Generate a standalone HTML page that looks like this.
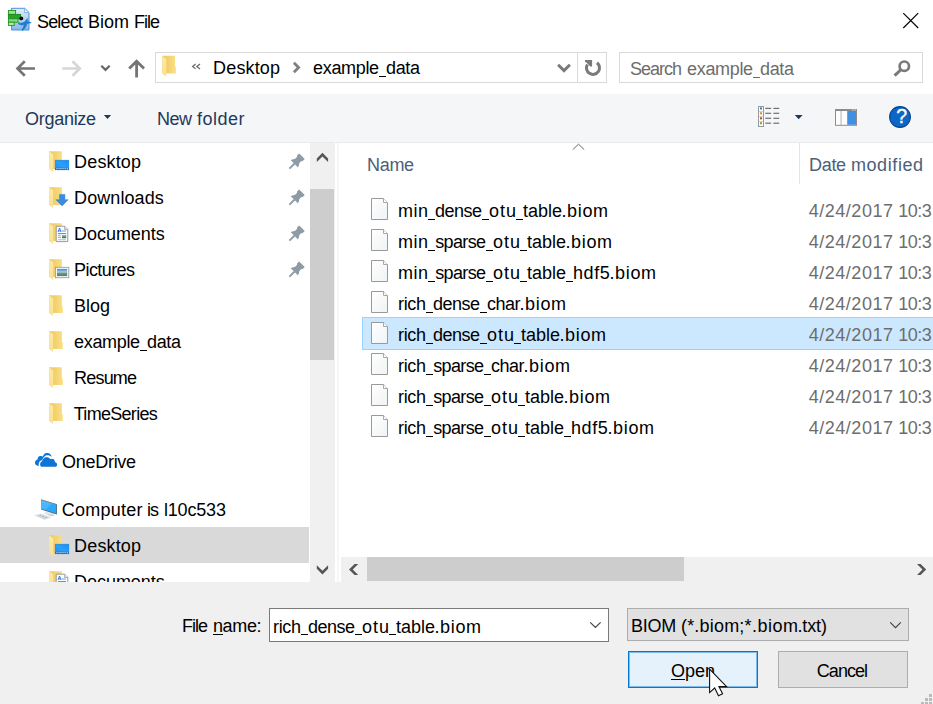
<!DOCTYPE html>
<html><head><meta charset="utf-8"><title>Select Biom File</title>
<style>
html,body{margin:0;padding:0;}
body{width:933px;height:704px;overflow:hidden;background:#fff;font-family:"Liberation Sans", sans-serif;position:relative;}
.t{position:absolute;white-space:pre;font-family:"Liberation Sans", sans-serif;}
.a{position:absolute;}
u{text-decoration:underline;text-underline-offset:2px;text-decoration-thickness:1px;}
</style></head>
<body>
<div class="a" style="left:0;top:94px;width:933px;height:48px;background:#f5f6f7;"></div>
<div class="a" style="left:0;top:142px;width:933px;height:1px;background:#e9eaeb;"></div>
<div class="a" style="left:0;top:582px;width:933px;height:122px;background:#f0f0f0;"></div>
<span class="t" style="left:37.05px;top:12.76px;font-size:18px;line-height:18px;letter-spacing:-0.850px;color:#000;">Select</span><span class="t" style="left:88.10px;top:12.76px;font-size:18px;line-height:18px;letter-spacing:-0.017px;color:#000;">Biom</span><span class="t" style="left:134.10px;top:12.76px;font-size:18px;line-height:18px;letter-spacing:-1.017px;color:#000;">File</span>
<div class="a" style="left:155px;top:52px;width:452px;height:31px;border:1px solid #d9d9d9;box-sizing:border-box;background:#fff;"></div>
<div class="a" style="left:577px;top:53px;width:1px;height:29px;background:#d9d9d9;"></div>
<span class="t" style="left:213.10px;top:59.26px;font-size:18px;line-height:18px;letter-spacing:0.142px;color:#000;">Desktop</span>
<span class="t" style="left:313.05px;top:59.26px;font-size:18px;line-height:18px;letter-spacing:-0.333px;color:#000;">example</span><div class="a" style="left:378.80px;top:76.00px;width:7.40px;height:1.2px;background:#000;"></div><span class="t" style="left:386.05px;top:59.26px;font-size:18px;line-height:18px;letter-spacing:-0.350px;color:#000;">data</span>
<div class="a" style="left:619px;top:52px;width:304px;height:31px;border:1px solid #d9d9d9;box-sizing:border-box;background:#fff;"></div>
<span class="t" style="left:630.05px;top:59.76px;font-size:18px;line-height:18px;letter-spacing:-1.000px;color:#6d6d6d;">Search</span><span class="t" style="left:687.05px;top:59.76px;font-size:18px;line-height:18px;letter-spacing:-0.333px;color:#6d6d6d;">example</span><div class="a" style="left:752.80px;top:77.00px;width:7.40px;height:1.2px;background:#6d6d6d;"></div><span class="t" style="left:760.05px;top:59.76px;font-size:18px;line-height:18px;letter-spacing:-0.350px;color:#6d6d6d;">data</span>
<span class="t" style="left:25.05px;top:110.06px;font-size:18px;line-height:18px;letter-spacing:-0.286px;color:#1e395b;">Organize</span>
<span class="t" style="left:157.10px;top:110.06px;font-size:18px;line-height:18px;letter-spacing:-0.600px;color:#1e395b;">New</span><span class="t" style="left:196.95px;top:110.06px;font-size:18px;line-height:18px;letter-spacing:0.500px;color:#1e395b;">folder</span>
<div class="a" style="left:0;top:527px;width:309px;height:36px;background:#d9d9d9;"></div>
<span class="t" style="left:74.10px;top:152.96px;font-size:18px;line-height:18px;letter-spacing:0.142px;color:#000;">Desktop</span>
<span class="t" style="left:74.10px;top:188.96px;font-size:18px;line-height:18px;letter-spacing:0.075px;color:#000;">Downloads</span>
<span class="t" style="left:74.10px;top:224.96px;font-size:18px;line-height:18px;letter-spacing:-0.050px;color:#000;">Documents</span>
<span class="t" style="left:74.10px;top:260.96px;font-size:18px;line-height:18px;letter-spacing:-0.593px;color:#000;">Pictures</span>
<span class="t" style="left:74.10px;top:296.96px;font-size:18px;line-height:18px;letter-spacing:-0.017px;color:#000;">Blog</span>
<span class="t" style="left:74.05px;top:332.96px;font-size:18px;line-height:18px;letter-spacing:-0.333px;color:#000;">example</span><div class="a" style="left:139.80px;top:350.00px;width:7.40px;height:1.2px;background:#000;"></div><span class="t" style="left:147.05px;top:332.96px;font-size:18px;line-height:18px;letter-spacing:-0.350px;color:#000;">data</span>
<span class="t" style="left:74.10px;top:368.96px;font-size:18px;line-height:18px;letter-spacing:-0.810px;color:#000;">Resume</span>
<span class="t" style="left:73.70px;top:404.96px;font-size:18px;line-height:18px;letter-spacing:-0.694px;color:#000;">TimeSeries</span>
<span class="t" style="left:62.05px;top:452.96px;font-size:18px;line-height:18px;letter-spacing:-0.286px;color:#000;">OneDrive</span>
<span class="t" style="left:61.80px;top:500.96px;font-size:18px;line-height:18px;letter-spacing:0.236px;color:#000;">Computer</span><span class="t" style="left:146.95px;top:500.96px;font-size:18px;line-height:18px;letter-spacing:-1.000px;color:#000;">is</span><span class="t" style="left:163.95px;top:500.96px;font-size:18px;line-height:18px;letter-spacing:-0.183px;color:#000;">l10c533</span>
<span class="t" style="left:74.10px;top:536.96px;font-size:18px;line-height:18px;letter-spacing:0.142px;color:#000;">Desktop</span>
<div class="a" style="left:0;top:563px;width:309px;height:19px;overflow:hidden;"><span class="t" style="left:74.10px;top:9.96px;font-size:18px;line-height:18px;letter-spacing:-0.050px;color:#000;">Documents</span></div>
<div class="a" style="left:310px;top:143px;width:25px;height:439px;background:#f0f0f0;"></div>
<div class="a" style="left:310px;top:189px;width:24px;height:171px;background:#cdcdcd;"></div>
<div class="a" style="left:337px;top:143px;width:2px;height:439px;background:#f7f7f7;"></div>
<div class="a" style="left:799px;top:143px;width:1px;height:41px;background:#e5e5e5;"></div>
<span class="t" style="left:367.10px;top:156.46px;font-size:18px;line-height:18px;letter-spacing:-0.350px;color:#4c607a;">Name</span>
<span class="t" style="left:809.10px;top:156.46px;font-size:18px;line-height:18px;letter-spacing:-0.350px;color:#4c607a;">Date</span><span class="t" style="left:850.95px;top:156.46px;font-size:18px;line-height:18px;letter-spacing:0.586px;color:#4c607a;">modified</span>
<div class="a" style="left:362px;top:317px;width:580px;height:33px;background:#cce8ff;border:1px solid #99d1ff;box-sizing:border-box;"></div>
<span class="t" style="left:397.95px;top:201.76px;font-size:18px;line-height:18px;letter-spacing:0.550px;color:#000;">min</span><div class="a" style="left:427.80px;top:219.00px;width:7.40px;height:1.2px;background:#000;"></div><span class="t" style="left:435.05px;top:201.76px;font-size:18px;line-height:18px;letter-spacing:-0.500px;color:#000;">dense</span><div class="a" style="left:481.80px;top:219.00px;width:7.40px;height:1.2px;background:#000;"></div><span class="t" style="left:489.05px;top:201.76px;font-size:18px;line-height:18px;letter-spacing:1.000px;color:#000;">otu</span><div class="a" style="left:515.80px;top:219.00px;width:7.40px;height:1.2px;background:#000;"></div><span class="t" style="left:523.05px;top:201.76px;font-size:18px;line-height:18px;letter-spacing:0.000px;color:#000;">table</span><span class="t" style="left:561.45px;top:201.76px;font-size:18px;line-height:18px;letter-spacing:0.650px;color:#000;">.biom</span>
<span class="t" style="left:808.80px;top:201.76px;font-size:18px;line-height:18px;letter-spacing:0.506px;color:#6d6d6d;">4/24/2017</span><span class="t" style="left:898.35px;top:201.76px;font-size:18px;line-height:18px;letter-spacing:-0.500px;color:#6d6d6d;">10:3</span>
<span class="t" style="left:397.95px;top:232.76px;font-size:18px;line-height:18px;letter-spacing:0.550px;color:#000;">min</span><div class="a" style="left:427.80px;top:250.00px;width:7.40px;height:1.2px;background:#000;"></div><span class="t" style="left:435.20px;top:232.76px;font-size:18px;line-height:18px;letter-spacing:-0.630px;color:#000;">sparse</span><div class="a" style="left:485.80px;top:250.00px;width:7.40px;height:1.2px;background:#000;"></div><span class="t" style="left:493.05px;top:232.76px;font-size:18px;line-height:18px;letter-spacing:1.000px;color:#000;">otu</span><div class="a" style="left:519.80px;top:250.00px;width:7.40px;height:1.2px;background:#000;"></div><span class="t" style="left:527.05px;top:232.76px;font-size:18px;line-height:18px;letter-spacing:0.000px;color:#000;">table</span><span class="t" style="left:565.45px;top:232.76px;font-size:18px;line-height:18px;letter-spacing:0.650px;color:#000;">.biom</span>
<span class="t" style="left:808.80px;top:232.76px;font-size:18px;line-height:18px;letter-spacing:0.506px;color:#6d6d6d;">4/24/2017</span><span class="t" style="left:898.35px;top:232.76px;font-size:18px;line-height:18px;letter-spacing:-0.500px;color:#6d6d6d;">10:3</span>
<span class="t" style="left:397.95px;top:263.76px;font-size:18px;line-height:18px;letter-spacing:0.550px;color:#000;">min</span><div class="a" style="left:427.80px;top:281.00px;width:7.40px;height:1.2px;background:#000;"></div><span class="t" style="left:435.20px;top:263.76px;font-size:18px;line-height:18px;letter-spacing:-0.630px;color:#000;">sparse</span><div class="a" style="left:485.80px;top:281.00px;width:7.40px;height:1.2px;background:#000;"></div><span class="t" style="left:493.05px;top:263.76px;font-size:18px;line-height:18px;letter-spacing:1.000px;color:#000;">otu</span><div class="a" style="left:519.80px;top:281.00px;width:7.40px;height:1.2px;background:#000;"></div><span class="t" style="left:527.05px;top:263.76px;font-size:18px;line-height:18px;letter-spacing:0.000px;color:#000;">table</span><div class="a" style="left:565.80px;top:281.00px;width:7.40px;height:1.2px;background:#000;"></div><span class="t" style="left:572.95px;top:263.76px;font-size:18px;line-height:18px;letter-spacing:0.633px;color:#000;">hdf5</span><span class="t" style="left:609.45px;top:263.76px;font-size:18px;line-height:18px;letter-spacing:0.650px;color:#000;">.biom</span>
<span class="t" style="left:808.80px;top:263.76px;font-size:18px;line-height:18px;letter-spacing:0.506px;color:#6d6d6d;">4/24/2017</span><span class="t" style="left:898.35px;top:263.76px;font-size:18px;line-height:18px;letter-spacing:-0.500px;color:#6d6d6d;">10:3</span>
<span class="t" style="left:397.95px;top:294.76px;font-size:18px;line-height:18px;letter-spacing:-0.300px;color:#000;">rich</span><div class="a" style="left:425.80px;top:312.00px;width:7.40px;height:1.2px;background:#000;"></div><span class="t" style="left:433.05px;top:294.76px;font-size:18px;line-height:18px;letter-spacing:-0.500px;color:#000;">dense</span><div class="a" style="left:479.80px;top:312.00px;width:7.40px;height:1.2px;background:#000;"></div><span class="t" style="left:487.05px;top:294.76px;font-size:18px;line-height:18px;letter-spacing:-0.533px;color:#000;">char</span><span class="t" style="left:519.45px;top:294.76px;font-size:18px;line-height:18px;letter-spacing:0.650px;color:#000;">.biom</span>
<span class="t" style="left:808.80px;top:294.76px;font-size:18px;line-height:18px;letter-spacing:0.506px;color:#6d6d6d;">4/24/2017</span><span class="t" style="left:898.35px;top:294.76px;font-size:18px;line-height:18px;letter-spacing:-0.500px;color:#6d6d6d;">10:3</span>
<span class="t" style="left:397.95px;top:325.76px;font-size:18px;line-height:18px;letter-spacing:-0.300px;color:#000;">rich</span><div class="a" style="left:425.80px;top:343.00px;width:7.40px;height:1.2px;background:#000;"></div><span class="t" style="left:433.05px;top:325.76px;font-size:18px;line-height:18px;letter-spacing:-0.500px;color:#000;">dense</span><div class="a" style="left:479.80px;top:343.00px;width:7.40px;height:1.2px;background:#000;"></div><span class="t" style="left:487.05px;top:325.76px;font-size:18px;line-height:18px;letter-spacing:1.000px;color:#000;">otu</span><div class="a" style="left:513.80px;top:343.00px;width:7.40px;height:1.2px;background:#000;"></div><span class="t" style="left:521.05px;top:325.76px;font-size:18px;line-height:18px;letter-spacing:0.000px;color:#000;">table</span><span class="t" style="left:559.45px;top:325.76px;font-size:18px;line-height:18px;letter-spacing:0.650px;color:#000;">.biom</span>
<span class="t" style="left:808.80px;top:325.76px;font-size:18px;line-height:18px;letter-spacing:0.506px;color:#6d6d6d;">4/24/2017</span><span class="t" style="left:898.35px;top:325.76px;font-size:18px;line-height:18px;letter-spacing:-0.500px;color:#6d6d6d;">10:3</span>
<span class="t" style="left:397.95px;top:356.76px;font-size:18px;line-height:18px;letter-spacing:-0.300px;color:#000;">rich</span><div class="a" style="left:425.80px;top:374.00px;width:7.40px;height:1.2px;background:#000;"></div><span class="t" style="left:433.20px;top:356.76px;font-size:18px;line-height:18px;letter-spacing:-0.630px;color:#000;">sparse</span><div class="a" style="left:483.80px;top:374.00px;width:7.40px;height:1.2px;background:#000;"></div><span class="t" style="left:491.05px;top:356.76px;font-size:18px;line-height:18px;letter-spacing:-0.533px;color:#000;">char</span><span class="t" style="left:523.45px;top:356.76px;font-size:18px;line-height:18px;letter-spacing:0.650px;color:#000;">.biom</span>
<span class="t" style="left:808.80px;top:356.76px;font-size:18px;line-height:18px;letter-spacing:0.506px;color:#6d6d6d;">4/24/2017</span><span class="t" style="left:898.35px;top:356.76px;font-size:18px;line-height:18px;letter-spacing:-0.500px;color:#6d6d6d;">10:3</span>
<span class="t" style="left:397.95px;top:387.76px;font-size:18px;line-height:18px;letter-spacing:-0.300px;color:#000;">rich</span><div class="a" style="left:425.80px;top:405.00px;width:7.40px;height:1.2px;background:#000;"></div><span class="t" style="left:433.20px;top:387.76px;font-size:18px;line-height:18px;letter-spacing:-0.630px;color:#000;">sparse</span><div class="a" style="left:483.80px;top:405.00px;width:7.40px;height:1.2px;background:#000;"></div><span class="t" style="left:491.05px;top:387.76px;font-size:18px;line-height:18px;letter-spacing:1.000px;color:#000;">otu</span><div class="a" style="left:517.80px;top:405.00px;width:7.40px;height:1.2px;background:#000;"></div><span class="t" style="left:525.05px;top:387.76px;font-size:18px;line-height:18px;letter-spacing:0.000px;color:#000;">table</span><span class="t" style="left:563.45px;top:387.76px;font-size:18px;line-height:18px;letter-spacing:0.650px;color:#000;">.biom</span>
<span class="t" style="left:808.80px;top:387.76px;font-size:18px;line-height:18px;letter-spacing:0.506px;color:#6d6d6d;">4/24/2017</span><span class="t" style="left:898.35px;top:387.76px;font-size:18px;line-height:18px;letter-spacing:-0.500px;color:#6d6d6d;">10:3</span>
<span class="t" style="left:397.95px;top:418.76px;font-size:18px;line-height:18px;letter-spacing:-0.300px;color:#000;">rich</span><div class="a" style="left:425.80px;top:436.00px;width:7.40px;height:1.2px;background:#000;"></div><span class="t" style="left:433.20px;top:418.76px;font-size:18px;line-height:18px;letter-spacing:-0.630px;color:#000;">sparse</span><div class="a" style="left:483.80px;top:436.00px;width:7.40px;height:1.2px;background:#000;"></div><span class="t" style="left:491.05px;top:418.76px;font-size:18px;line-height:18px;letter-spacing:1.000px;color:#000;">otu</span><div class="a" style="left:517.80px;top:436.00px;width:7.40px;height:1.2px;background:#000;"></div><span class="t" style="left:525.05px;top:418.76px;font-size:18px;line-height:18px;letter-spacing:0.000px;color:#000;">table</span><div class="a" style="left:563.80px;top:436.00px;width:7.40px;height:1.2px;background:#000;"></div><span class="t" style="left:570.95px;top:418.76px;font-size:18px;line-height:18px;letter-spacing:0.633px;color:#000;">hdf5</span><span class="t" style="left:607.45px;top:418.76px;font-size:18px;line-height:18px;letter-spacing:0.650px;color:#000;">.biom</span>
<span class="t" style="left:808.80px;top:418.76px;font-size:18px;line-height:18px;letter-spacing:0.506px;color:#6d6d6d;">4/24/2017</span><span class="t" style="left:898.35px;top:418.76px;font-size:18px;line-height:18px;letter-spacing:-0.500px;color:#6d6d6d;">10:3</span>
<div class="a" style="left:341px;top:557px;width:592px;height:25px;background:#f0f0f0;"></div>
<div class="a" style="left:367px;top:557px;width:317px;height:24px;background:#cdcdcd;"></div>
<span class="t" style="left:182.10px;top:617.26px;font-size:18px;line-height:18px;letter-spacing:-1.017px;color:#000;">File</span><div class="a" style="left:213px;top:633.70px;width:10px;height:1.1px;background:#000;"></div><span class="t" style="left:212.95px;top:617.26px;font-size:18px;line-height:18px;letter-spacing:-0.350px;color:#000;">name:</span>
<div class="a" style="left:269px;top:608px;width:340px;height:34px;border:1px solid #7a7a7a;box-sizing:border-box;background:#fff;"></div>
<span class="t" style="left:272.95px;top:617.56px;font-size:18px;line-height:18px;letter-spacing:-0.300px;color:#000;">rich</span><div class="a" style="left:300.80px;top:634.00px;width:7.40px;height:1.2px;background:#000;"></div><span class="t" style="left:308.05px;top:617.56px;font-size:18px;line-height:18px;letter-spacing:-0.500px;color:#000;">dense</span><div class="a" style="left:354.80px;top:634.00px;width:7.40px;height:1.2px;background:#000;"></div><span class="t" style="left:362.05px;top:617.56px;font-size:18px;line-height:18px;letter-spacing:1.000px;color:#000;">otu</span><div class="a" style="left:388.80px;top:634.00px;width:7.40px;height:1.2px;background:#000;"></div><span class="t" style="left:396.05px;top:617.56px;font-size:18px;line-height:18px;letter-spacing:0.000px;color:#000;">table</span><span class="t" style="left:434.45px;top:617.56px;font-size:18px;line-height:18px;letter-spacing:0.650px;color:#000;">.biom</span>
<div class="a" style="left:627px;top:608px;width:282px;height:33px;border:1px solid #adadad;box-sizing:border-box;background:#e1e1e1;"></div>
<span class="t" style="left:631.10px;top:617.36px;font-size:18px;line-height:18px;letter-spacing:-0.267px;color:#000;">BIOM</span><span class="t" style="left:681.00px;top:617.36px;font-size:18px;line-height:18px;letter-spacing:0.186px;color:#000;">(*.biom;</span><span class="t" style="left:744.45px;top:617.36px;font-size:18px;line-height:18px;letter-spacing:0.520px;color:#000;">*.biom</span><span class="t" style="left:797.45px;top:617.36px;font-size:18px;line-height:18px;letter-spacing:-0.113px;color:#000;">.txt)</span>
<div class="a" style="left:628px;top:651px;width:130px;height:37px;border:1px solid #0078d7;box-sizing:border-box;background:#e5f1fb;box-shadow:inset 0 0 0 1px rgba(0,120,215,0.45);"></div>
<div class="a" style="left:671px;top:678.70px;width:14px;height:1.1px;background:#000;"></div><span class="t" style="left:671.05px;top:662.26px;font-size:18px;line-height:18px;letter-spacing:0.000px;color:#000;">Open</span>
<div class="a" style="left:778px;top:651px;width:130px;height:37px;border:1px solid #adadad;box-sizing:border-box;background:#e1e1e1;"></div>
<span class="t" style="left:816.80px;top:662.26px;font-size:18px;line-height:18px;letter-spacing:-0.950px;color:#000;">Cancel</span>
<svg class="a" style="left:0;top:0" width="933" height="704" viewBox="0 0 933 704">
<defs>
<linearGradient id="gFolderBack" x1="0" y1="0" x2="1" y2="0"><stop offset="0" stop-color="#efc95e"/><stop offset="0.3" stop-color="#f1ce66"/><stop offset="1" stop-color="#fbe08a"/></linearGradient>
<linearGradient id="gFolderFlap" x1="0" y1="0" x2="0" y2="1"><stop offset="0" stop-color="#fdeaa8"/><stop offset="1" stop-color="#f9e092"/></linearGradient>
<linearGradient id="gFile" x1="0" y1="0" x2="1" y2="1"><stop offset="0" stop-color="#ffffff"/><stop offset="1" stop-color="#f0f2f4"/></linearGradient>
<linearGradient id="gPage" x1="0" y1="0" x2="0" y2="1"><stop offset="0" stop-color="#e3edf9"/><stop offset="1" stop-color="#86b8e6"/></linearGradient>
<linearGradient id="gDesk" x1="0" y1="1" x2="1" y2="0"><stop offset="0" stop-color="#1e8ff2"/><stop offset="0.5" stop-color="#2aa0fb"/><stop offset="1" stop-color="#1c8cf0"/></linearGradient>
<linearGradient id="gPic" x1="0" y1="0" x2="0" y2="1"><stop offset="0" stop-color="#3f86d6"/><stop offset="0.45" stop-color="#a9cfee"/><stop offset="0.6" stop-color="#6f9a78"/><stop offset="1" stop-color="#5a7a6a"/></linearGradient>
<linearGradient id="gMon" x1="0" y1="0" x2="1" y2="1"><stop offset="0" stop-color="#55bcff"/><stop offset="0.5" stop-color="#44b4ff"/><stop offset="0.52" stop-color="#2ea9fb"/><stop offset="1" stop-color="#29a5f8"/></linearGradient>
</defs>
<g>
<path d="M11.5,8.3 L24.6,8.3 L29,12.6 L29,30 L11.5,30 Z" fill="url(#gPage)" stroke="#4d93d6" stroke-width="1"/>
<path d="M24.6,8.3 L24.6,12.6 L29,12.6 Z" fill="#f4f8fd" stroke="#6aa6de" stroke-width="0.8"/>
<path d="M18.5,22.8 C21,23.8 24,23 26,20.5 L27.4,18.6 L27.2,21.6 L31.2,22.6 L27,23.6 C26.4,26 25,28.6 22.6,30.4 L21.8,29.8 C23.4,27.8 24,26 24.2,24.6 C22.4,25.2 20.4,25 18.5,24 Z" fill="#1d7bd0" stroke="#1d7bd0" stroke-width="0.7" stroke-linejoin="round"/>
<rect x="8.4" y="10.4" width="7.2" height="4" fill="#9be08e" stroke="#1d9420" stroke-width="0.9"/>
<rect x="8.4" y="14.4" width="12.2" height="4.4" fill="#27a329" stroke="#148a18" stroke-width="0.9"/>
<rect x="8.4" y="18.8" width="9.6" height="3.4" fill="#8bd97e" stroke="#1d9420" stroke-width="0.9"/>
<rect x="8.4" y="22.2" width="5.8" height="3.2" fill="#b4eaa8" stroke="#1d9420" stroke-width="0.9"/>
<circle cx="21.3" cy="18.4" r="1.9" fill="#0a0a0a"/>
</g>
<path d="M903.3,13.1 L918.2,28 M918.2,13.1 L903.3,28" stroke="#000" stroke-width="1.15" fill="none"/>
<path d="M35,68.5 L17.8,68.5 M24.8,61.3 L17.5,68.5 L24.8,75.7" stroke="#747474" stroke-width="2.7" fill="none" stroke-linejoin="miter"/>
<path d="M62.3,68.5 L79.5,68.5 M72.5,61.3 L79.8,68.5 L72.5,75.7" stroke="#d6d6d6" stroke-width="2.7" fill="none"/>
<path d="M101.3,65.8 L105.5,69.9 L109.7,65.8" stroke="#666666" stroke-width="2.2" fill="none"/>
<path d="M136.6,77.6 L136.6,61.8 M129.2,68.6 L136.6,61.3 L144,68.6" stroke="#747474" stroke-width="2.8" fill="none"/>
<g transform="translate(162.2,55.8) scale(1.0)"><path d="M0,0 L12.8,0 L12.8,11 L13.7,11 L13.7,17.8 L0,17.8 Z" fill="url(#gFolderBack)"/><path d="M0,0.1 L4.1,3.2 L4.0,20.8 L0,17.9 Z" fill="url(#gFolderFlap)"/></g>
<path d="M195.6,64 L192.6,66.45 L195.6,68.9 M200,64 L196.8,66.45 L200,68.9" stroke="#666" stroke-width="1.2" fill="none"/>
<path d="M293.9,62.75 L298.6,67.45 L293.9,72.15" stroke="#808080" stroke-width="2.8" fill="none"/>
<path d="M558.1,64.7 L564,70.6 L569.9,64.7" stroke="#7a7a7a" stroke-width="3" fill="none"/>
<path d="M597.0,62.8 A6.5,6.5 0 1 1 587.4,64.6" stroke="#7a7a7a" stroke-width="3" fill="none"/>

<path d="M585.0,60.1 L592.1,60.1 L592.1,66.6 L590.2,66.6 L586.2,62.2 L585.0,62.0 Z" fill="#7a7a7a"/>
<circle cx="904.3" cy="66.2" r="4.7" stroke="#7a7a7a" stroke-width="2.7" fill="none"/>
<path d="M901.1,69.5 L894.6,75.7" stroke="#7a7a7a" stroke-width="3.1" fill="none" stroke-linecap="butt"/>
<path d="M103.9,115 L111.1,115 L107.5,119.1 Z" fill="#1e395b"/>
<rect x="758.5" y="106.5" width="5" height="20" fill="#fbfbfb" stroke="#9a9a9a" stroke-width="1"/>
<rect x="760" y="107.4" width="2" height="2" fill="#2b7cd3"/>
<rect x="765.3" y="107.80000000000001" width="5.8" height="1.2" fill="#707070"/>
<rect x="773.4" y="107.80000000000001" width="5.8" height="1.2" fill="#707070"/>
<rect x="760" y="112.3" width="2" height="2" fill="#e08a1e"/>
<rect x="765.3" y="112.7" width="5.8" height="1.2" fill="#707070"/>
<rect x="773.4" y="112.7" width="5.8" height="1.2" fill="#707070"/>
<rect x="760" y="117.3" width="2" height="2" fill="#d03a2a"/>
<rect x="765.3" y="117.7" width="5.8" height="1.2" fill="#707070"/>
<rect x="773.4" y="117.7" width="5.8" height="1.2" fill="#707070"/>
<rect x="760" y="122.2" width="2" height="2" fill="#7aa83a"/>
<rect x="765.3" y="122.60000000000001" width="5.8" height="1.2" fill="#707070"/>
<rect x="773.4" y="122.60000000000001" width="5.8" height="1.2" fill="#707070"/>
<rect x="759" y="111.05" width="4.5" height="0.6" fill="#b5b5b5"/>
<rect x="759" y="116.05" width="4.5" height="0.6" fill="#b5b5b5"/>
<rect x="759" y="121.05" width="4.5" height="0.6" fill="#b5b5b5"/>
<path d="M794.8,115 L802.6,115 L798.7,119.2 Z" fill="#1e395b"/>
<rect x="835.5" y="110" width="21" height="15.3" fill="#fdfdfd" stroke="#8c8c8c" stroke-width="1"/>
<rect x="835" y="109" width="22" height="2" fill="#8c8c8c"/>
<rect x="852" y="109.5" width="0.9" height="0.9" fill="#e8e8e8"/><rect x="853.6" y="109.5" width="0.9" height="0.9" fill="#e8e8e8"/><rect x="855.2" y="109.5" width="0.9" height="0.9" fill="#e8e8e8"/>
<rect x="840.6" y="111" width="0.9" height="14" fill="#a9a9a9"/>
<rect x="847.2" y="111" width="8.8" height="13.8" fill="#3f8fe2"/>
<circle cx="900" cy="117" r="11.6" fill="#ffffff" opacity="0.55"/><circle cx="900" cy="117" r="10.4" fill="#0a67c8" stroke="#07428c" stroke-width="1.1"/>
<g transform="translate(49.1,151.2) scale(1.0)"><path d="M0,0 L12.8,0 L12.8,11 L13.7,11 L13.7,17.8 L0,17.8 Z" fill="url(#gFolderBack)"/><path d="M0,0.1 L4.1,3.2 L4.0,20.8 L0,17.9 Z" fill="url(#gFolderFlap)"/></g>
<g transform="translate(49.1,187.2) scale(1.0)"><path d="M0,0 L12.8,0 L12.8,11 L13.7,11 L13.7,17.8 L0,17.8 Z" fill="url(#gFolderBack)"/><path d="M0,0.1 L4.1,3.2 L4.0,20.8 L0,17.9 Z" fill="url(#gFolderFlap)"/></g>
<g transform="translate(49.1,223.2) scale(1.0)"><path d="M0,0 L12.8,0 L12.8,11 L13.7,11 L13.7,17.8 L0,17.8 Z" fill="url(#gFolderBack)"/><path d="M0,0.1 L4.1,3.2 L4.0,20.8 L0,17.9 Z" fill="url(#gFolderFlap)"/></g>
<g transform="translate(49.1,259.2) scale(1.0)"><path d="M0,0 L12.8,0 L12.8,11 L13.7,11 L13.7,17.8 L0,17.8 Z" fill="url(#gFolderBack)"/><path d="M0,0.1 L4.1,3.2 L4.0,20.8 L0,17.9 Z" fill="url(#gFolderFlap)"/></g>
<g transform="translate(49.1,295.2) scale(1.0)"><path d="M0,0 L12.8,0 L12.8,11 L13.7,11 L13.7,17.8 L0,17.8 Z" fill="url(#gFolderBack)"/><path d="M0,0.1 L4.1,3.2 L4.0,20.8 L0,17.9 Z" fill="url(#gFolderFlap)"/></g>
<g transform="translate(49.1,331.2) scale(1.0)"><path d="M0,0 L12.8,0 L12.8,11 L13.7,11 L13.7,17.8 L0,17.8 Z" fill="url(#gFolderBack)"/><path d="M0,0.1 L4.1,3.2 L4.0,20.8 L0,17.9 Z" fill="url(#gFolderFlap)"/></g>
<g transform="translate(49.1,367.2) scale(1.0)"><path d="M0,0 L12.8,0 L12.8,11 L13.7,11 L13.7,17.8 L0,17.8 Z" fill="url(#gFolderBack)"/><path d="M0,0.1 L4.1,3.2 L4.0,20.8 L0,17.9 Z" fill="url(#gFolderFlap)"/></g>
<g transform="translate(49.1,403.2) scale(1.0)"><path d="M0,0 L12.8,0 L12.8,11 L13.7,11 L13.7,17.8 L0,17.8 Z" fill="url(#gFolderBack)"/><path d="M0,0.1 L4.1,3.2 L4.0,20.8 L0,17.9 Z" fill="url(#gFolderFlap)"/></g>
<g transform="translate(49.1,535.2) scale(1.0)"><path d="M0,0 L12.8,0 L12.8,11 L13.7,11 L13.7,17.8 L0,17.8 Z" fill="url(#gFolderBack)"/><path d="M0,0.1 L4.1,3.2 L4.0,20.8 L0,17.9 Z" fill="url(#gFolderFlap)"/></g>
<clipPath id="cNav"><rect x="0" y="563" width="309" height="19"/></clipPath>
<g clip-path="url(#cNav)"><g transform="translate(49.1,571.2) scale(1.0)"><path d="M0,0 L12.8,0 L12.8,11 L13.7,11 L13.7,17.8 L0,17.8 Z" fill="url(#gFolderBack)"/><path d="M0,0.1 L4.1,3.2 L4.0,20.8 L0,17.9 Z" fill="url(#gFolderFlap)"/></g>
<g transform="translate(0,348)"><path d="M56.2,226.2 L64.6,226.2 L67.8,229.4 L67.8,241.6 L56.2,241.6 Z" fill="#fdfdfd" stroke="#8f8f8f" stroke-width="0.9"/><path d="M64.6,226.2 L64.6,229.4 L67.8,229.4" fill="#e9e9e9" stroke="#8f8f8f" stroke-width="0.7"/><path d="M58,232 L59.6,228 L61,232 M58.6,230.8 L60.5,230.8" stroke="#1f78d6" stroke-width="0.9" fill="none"/><rect x="61.6" y="230.6" width="4.4" height="0.8" fill="#3d8de0"/><rect x="58" y="233.2" width="8" height="0.9" fill="#2b80dc"/><rect x="58" y="235.4" width="3" height="0.8" fill="#9a9a9a"/><rect x="58" y="237.2" width="3" height="0.8" fill="#9a9a9a"/><rect x="62" y="235.2" width="4.2" height="1.2" fill="#5a9be6"/><rect x="62" y="236.4" width="4.2" height="1.8" fill="#3f7a4a"/><rect x="58" y="239.4" width="8" height="0.8" fill="#a8a8a8"/></g></g>
<g transform="translate(0,0)"><rect x="55.2" y="160.2" width="13.6" height="9.6" fill="url(#gDesk)" stroke="#1a80de" stroke-width="0.6"/><rect x="55.2" y="167.8" width="13.6" height="2" fill="#1665c6"/><rect x="56.3" y="168.3" width="0.9" height="0.9" fill="#fff"/><rect x="65.4" y="168.3" width="0.9" height="0.9" fill="#fff"/><rect x="67" y="168.3" width="0.9" height="0.9" fill="#fff"/><rect x="57.6" y="168.45" width="7.2" height="0.6" fill="#cfe4fb"/></g>
<g transform="translate(0,384)"><rect x="55.2" y="160.2" width="13.6" height="9.6" fill="url(#gDesk)" stroke="#1a80de" stroke-width="0.6"/><rect x="55.2" y="167.8" width="13.6" height="2" fill="#1665c6"/><rect x="56.3" y="168.3" width="0.9" height="0.9" fill="#fff"/><rect x="65.4" y="168.3" width="0.9" height="0.9" fill="#fff"/><rect x="67" y="168.3" width="0.9" height="0.9" fill="#fff"/><rect x="57.6" y="168.45" width="7.2" height="0.6" fill="#cfe4fb"/></g>
<path d="M59.4,194.4 L64.9,194.4 L64.9,199.7 L68.2,199.7 L62.1,205.9 L55.9,199.7 L59.4,199.7 Z" fill="#3b8de0" stroke="#2f7fd2" stroke-width="0.5"/>
<g transform="translate(0,0)"><path d="M56.2,226.2 L64.6,226.2 L67.8,229.4 L67.8,241.6 L56.2,241.6 Z" fill="#fdfdfd" stroke="#8f8f8f" stroke-width="0.9"/><path d="M64.6,226.2 L64.6,229.4 L67.8,229.4" fill="#e9e9e9" stroke="#8f8f8f" stroke-width="0.7"/><path d="M58,232 L59.6,228 L61,232 M58.6,230.8 L60.5,230.8" stroke="#1f78d6" stroke-width="0.9" fill="none"/><rect x="61.6" y="230.6" width="4.4" height="0.8" fill="#3d8de0"/><rect x="58" y="233.2" width="8" height="0.9" fill="#2b80dc"/><rect x="58" y="235.4" width="3" height="0.8" fill="#9a9a9a"/><rect x="58" y="237.2" width="3" height="0.8" fill="#9a9a9a"/><rect x="62" y="235.2" width="4.2" height="1.2" fill="#5a9be6"/><rect x="62" y="236.4" width="4.2" height="1.8" fill="#3f7a4a"/><rect x="58" y="239.4" width="8" height="0.8" fill="#a8a8a8"/></g>
<rect x="55.4" y="267.3" width="13.4" height="10.4" fill="#fafafa" stroke="#9c9c9c" stroke-width="0.9"/>
<rect x="57" y="268.9" width="10.2" height="7.2" fill="url(#gPic)"/>
<g transform="translate(294.6,163.5) rotate(45)" fill="#8e9ba6" stroke="none"><path d="M-0.95,0 L0.95,0 L0.95,7.3 L-0.95,7.3 Z"/><path d="M-5,0.4 L5,0.4 C5,-2.0 3.0,-2.6 3.0,-4.6 L3.0,-6.2 L3.9,-7.6 L3.9,-10.4 L-3.9,-10.4 L-3.9,-7.6 L-3.0,-6.2 L-3.0,-4.6 C-3.0,-2.6 -5,-2.0 -5,0.4 Z"/></g>
<g transform="translate(294.6,199.5) rotate(45)" fill="#8e9ba6" stroke="none"><path d="M-0.95,0 L0.95,0 L0.95,7.3 L-0.95,7.3 Z"/><path d="M-5,0.4 L5,0.4 C5,-2.0 3.0,-2.6 3.0,-4.6 L3.0,-6.2 L3.9,-7.6 L3.9,-10.4 L-3.9,-10.4 L-3.9,-7.6 L-3.0,-6.2 L-3.0,-4.6 C-3.0,-2.6 -5,-2.0 -5,0.4 Z"/></g>
<g transform="translate(294.6,235.5) rotate(45)" fill="#8e9ba6" stroke="none"><path d="M-0.95,0 L0.95,0 L0.95,7.3 L-0.95,7.3 Z"/><path d="M-5,0.4 L5,0.4 C5,-2.0 3.0,-2.6 3.0,-4.6 L3.0,-6.2 L3.9,-7.6 L3.9,-10.4 L-3.9,-10.4 L-3.9,-7.6 L-3.0,-6.2 L-3.0,-4.6 C-3.0,-2.6 -5,-2.0 -5,0.4 Z"/></g>
<g transform="translate(294.6,271.5) rotate(45)" fill="#8e9ba6" stroke="none"><path d="M-0.95,0 L0.95,0 L0.95,7.3 L-0.95,7.3 Z"/><path d="M-5,0.4 L5,0.4 C5,-2.0 3.0,-2.6 3.0,-4.6 L3.0,-6.2 L3.9,-7.6 L3.9,-10.4 L-3.9,-10.4 L-3.9,-7.6 L-3.0,-6.2 L-3.0,-4.6 C-3.0,-2.6 -5,-2.0 -5,0.4 Z"/></g>
<g fill="#0f74d6"><path d="M41.53,466.87 C41.34,466.67 40.65,466.17 40.41,465.67 C40.18,465.18 40.08,464.45 40.14,463.89 C40.19,463.32 40.43,462.73 40.73,462.30 C41.03,461.87 41.59,461.77 41.92,461.30 C42.25,460.84 42.35,460.04 42.72,459.51 C43.08,458.98 43.58,458.49 44.11,458.12 C44.64,457.76 45.34,457.46 45.90,457.33 C46.46,457.20 46.96,457.23 47.49,457.33 C48.02,457.43 48.61,457.66 49.08,457.92 C49.54,458.19 49.84,458.80 50.27,458.92 C50.70,459.04 51.16,458.61 51.66,458.64 C52.16,458.67 52.79,458.84 53.25,459.12 C53.71,459.39 54.15,459.84 54.44,460.31 C54.74,460.77 54.74,461.50 55.04,461.90 C55.34,462.30 55.90,462.36 56.23,462.69 C56.56,463.02 56.88,463.45 57.03,463.89 C57.17,464.32 57.19,464.87 57.11,465.28 C57.03,465.69 56.80,466.08 56.55,466.35 C56.30,466.61 55.79,466.78 55.64,466.87 Z"/><path d="M38.66,465.87 C38.37,465.95 37.47,465.79 36.96,465.55 C36.44,465.32 35.90,464.93 35.56,464.48 C35.23,464.04 35.03,463.39 34.97,462.89 C34.90,462.40 35.00,461.92 35.17,461.50 C35.33,461.08 35.56,460.71 35.96,460.39 C36.36,460.07 37.25,460.00 37.55,459.59 C37.85,459.18 37.58,458.41 37.75,457.92 C37.92,457.43 38.18,456.98 38.55,456.65 C38.91,456.32 39.44,456.04 39.94,455.94 C40.43,455.83 41.05,455.94 41.53,456.02 C42.00,456.10 42.40,456.66 42.80,456.41 C43.20,456.17 43.46,455.06 43.91,454.55 C44.36,454.04 44.97,453.62 45.50,453.35 C46.03,453.09 46.56,452.99 47.09,452.96 C47.62,452.92 48.18,452.99 48.68,453.15 C49.18,453.32 49.67,453.60 50.07,453.95 C50.47,454.29 50.79,454.74 51.07,455.22 C51.34,455.70 51.94,456.70 51.74,456.81 C51.54,456.92 50.42,456.10 49.87,455.86 C49.33,455.61 48.95,455.45 48.48,455.34 C48.02,455.23 47.55,455.19 47.09,455.22 C46.63,455.25 46.13,455.34 45.70,455.54 C45.27,455.74 44.87,456.07 44.51,456.41 C44.14,456.76 43.82,457.19 43.51,457.61 C43.20,458.02 42.90,458.52 42.64,458.92 C42.37,459.31 42.29,459.68 41.92,459.99 C41.55,460.30 40.84,460.47 40.41,460.79 C39.98,461.10 39.61,461.45 39.34,461.90 C39.08,462.35 38.92,462.96 38.82,463.49 C38.72,464.02 38.77,464.68 38.74,465.08 C38.72,465.48 38.96,465.79 38.66,465.87 Z"/></g>
<g><path d="M34,515.3 L41.2,513.6 L51.6,517.6 L44.4,520.1 Z" fill="#dde3e8"/><path d="M36.6,515.5 L41.2,514.5 L49,517.5 L44.4,519 Z" fill="#c9d0d7" opacity="0.8"/><path d="M39.2,515.1 L40.4,514.8 L41.4,515.2 L40.2,515.5 Z M42.2,516.3 L43.4,516 L44.4,516.4 L43.2,516.7 Z M45.2,517.4 L46.4,517.1 L47.4,517.5 L46.2,517.8 Z" fill="#9aa3ad"/><path d="M45.6,511.2 L53.9,513.8 L53.9,515.8 L48.6,515.4 L44.3,513.4 Z" fill="#dfe5ea"/><path d="M48.6,514.4 L53.8,515.0 L53.8,515.8 L48.6,515.2 Z" fill="#aeb6bf"/><path d="M41.2,499.4 L56.9,504.3 L56.9,514.4 L41.2,509.5 Z" fill="#4f5a66"/><path d="M41.2,499.9 L56.2,504.6 L56.2,513.4 L41.2,508.7 Z" fill="url(#gMon)"/><path d="M41.2,499.3 L56.9,504.2 L56.9,504.8 L41.2,499.9 Z" fill="#a08a7e" opacity="0.9"/></g>
<path d="M322.45,152.8 L328.1,158.4 L328.1,162 L322.45,156.5 L316.8,162 L316.8,158.4 Z" fill="#555555"/>
<path d="M322.45,574.4 L328.1,568.8 L328.1,565.2 L322.45,570.7 L316.8,565.2 L316.8,568.8 Z" fill="#555555"/>
<path d="M349,569.5 L354.6,563.9 L358.2,563.9 L352.7,569.5 L358.2,575.1 L354.6,575.1 Z" fill="#555555"/>
<path d="M926.2,569.5 L920.6,563.9 L917,563.9 L922.5,569.5 L917,575.1 L920.6,575.1 Z" fill="#555555"/>
<path d="M572.8,149.6 L578.5,144.2 L584.2,149.6" stroke="#6a6a6a" stroke-width="1" fill="none"/>
<g transform="translate(371,198)"><path d="M0.5,0.5 L12.5,0.5 L16.5,4.5 L16.5,21.5 L0.5,21.5 Z" fill="url(#gFile)" stroke="#999999" stroke-width="1"/><path d="M12.5,0.5 L12.5,4.5 L16.5,4.5" fill="#ffffff" stroke="#a8a8a8" stroke-width="1"/></g>
<g transform="translate(371,229)"><path d="M0.5,0.5 L12.5,0.5 L16.5,4.5 L16.5,21.5 L0.5,21.5 Z" fill="url(#gFile)" stroke="#999999" stroke-width="1"/><path d="M12.5,0.5 L12.5,4.5 L16.5,4.5" fill="#ffffff" stroke="#a8a8a8" stroke-width="1"/></g>
<g transform="translate(371,260)"><path d="M0.5,0.5 L12.5,0.5 L16.5,4.5 L16.5,21.5 L0.5,21.5 Z" fill="url(#gFile)" stroke="#999999" stroke-width="1"/><path d="M12.5,0.5 L12.5,4.5 L16.5,4.5" fill="#ffffff" stroke="#a8a8a8" stroke-width="1"/></g>
<g transform="translate(371,291)"><path d="M0.5,0.5 L12.5,0.5 L16.5,4.5 L16.5,21.5 L0.5,21.5 Z" fill="url(#gFile)" stroke="#999999" stroke-width="1"/><path d="M12.5,0.5 L12.5,4.5 L16.5,4.5" fill="#ffffff" stroke="#a8a8a8" stroke-width="1"/></g>
<g transform="translate(371,322)"><path d="M0.5,0.5 L12.5,0.5 L16.5,4.5 L16.5,21.5 L0.5,21.5 Z" fill="url(#gFile)" stroke="#999999" stroke-width="1"/><path d="M12.5,0.5 L12.5,4.5 L16.5,4.5" fill="#ffffff" stroke="#a8a8a8" stroke-width="1"/></g>
<g transform="translate(371,353)"><path d="M0.5,0.5 L12.5,0.5 L16.5,4.5 L16.5,21.5 L0.5,21.5 Z" fill="url(#gFile)" stroke="#999999" stroke-width="1"/><path d="M12.5,0.5 L12.5,4.5 L16.5,4.5" fill="#ffffff" stroke="#a8a8a8" stroke-width="1"/></g>
<g transform="translate(371,384)"><path d="M0.5,0.5 L12.5,0.5 L16.5,4.5 L16.5,21.5 L0.5,21.5 Z" fill="url(#gFile)" stroke="#999999" stroke-width="1"/><path d="M12.5,0.5 L12.5,4.5 L16.5,4.5" fill="#ffffff" stroke="#a8a8a8" stroke-width="1"/></g>
<g transform="translate(371,415)"><path d="M0.5,0.5 L12.5,0.5 L16.5,4.5 L16.5,21.5 L0.5,21.5 Z" fill="url(#gFile)" stroke="#999999" stroke-width="1"/><path d="M12.5,0.5 L12.5,4.5 L16.5,4.5" fill="#ffffff" stroke="#a8a8a8" stroke-width="1"/></g>
<path d="M590.2,622.3 L595.4,627.5 L600.6,622.3" stroke="#444" stroke-width="1.2" fill="none"/>
<path d="M890.2,622.3 L895.5,627.6 L900.8,622.3" stroke="#444" stroke-width="1.2" fill="none"/>
<rect x="929" y="694" width="3" height="3" fill="#bababa"/>
<rect x="925" y="698" width="3" height="3" fill="#bababa"/>
<rect x="929" y="698" width="3" height="3" fill="#bababa"/>
<rect x="921" y="702" width="3" height="3" fill="#bababa"/>
<rect x="925" y="702" width="3" height="3" fill="#bababa"/>
<rect x="929" y="702" width="3" height="3" fill="#bababa"/>
<path d="M709.6,669.2 L709.6,692.6 L714.7,688.0 L718.5,695.8 L722.6,693.8 L718.9,686.6 L726.6,686.6 Z" fill="#fff" stroke="#111" stroke-width="1.1" stroke-linejoin="miter"/>
</svg>
<span class="t" style="left:896.35px;top:107.49px;font-size:19.5px;line-height:19.5px;letter-spacing:0.000px;color:#fff;-webkit-text-stroke:0.35px #fff;">?</span>
</body></html>
